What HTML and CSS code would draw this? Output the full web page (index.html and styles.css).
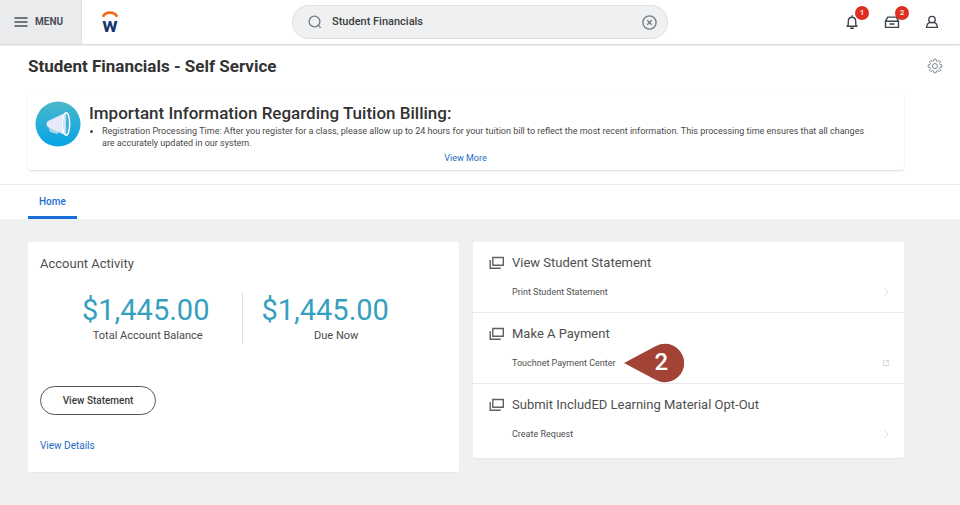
FILE: index.html
```html
<!DOCTYPE html>
<html lang="en">
<head>
    <meta charset="UTF-8">
    <meta name="viewport" content="width=device-width, initial-scale=1.0">
    <title>Student Financials</title>
    <link rel="stylesheet" href="styles.css">
</head>
<body>
    <header class="topbar">
        <div class="topbar-left">
            <button class="menu-btn" type="button">
                <svg width="14" height="10" viewBox="0 0 14 10" aria-hidden="true">
                    <path d="M0.5 1h13M0.5 5h13M0.5 9h13" stroke="#494f55" stroke-width="1.6"/>
                </svg>
                MENU
            </button>
            <a class="logo" href="#" aria-label="Workday home">
                <svg width="24" height="28" viewBox="0 0 24 28">
                    <path d="M4.8 8.8a7.8 6.8 0 0 1 14.4 0" fill="none" stroke="#f26b1d" stroke-width="2.6"/>
                    <text class="logo-text" x="12" y="24" text-anchor="middle">w</text>
                </svg>
            </a>
        </div>
        <div class="search">
            <svg width="14" height="14" viewBox="0 0 14 14" fill="none" stroke="#737a80" stroke-width="1.3" aria-hidden="true">
                <circle cx="6.5" cy="6.5" r="5.4"/>
                <path d="M10.4 10.4l2.3 2.5"/>
            </svg>
            <input type="text" value="Student Financials" aria-label="Search">
            <button type="button" aria-label="Clear search">
                <svg width="15" height="15" viewBox="0 0 15 15" fill="none" stroke="#737a80" stroke-width="1.3">
                    <circle cx="7.5" cy="7.5" r="6.6"/>
                    <path d="M5.3 5.3l4.4 4.4M9.7 5.3l-4.4 4.4"/>
                </svg>
            </button>
        </div>
        <div class="topbar-right">
            <button class="icon-btn" type="button" aria-label="Notifications">
                <svg width="16" height="16" viewBox="0 0 16 16" fill="none" stroke="#3f464d" stroke-width="1.4">
                    <path d="M2.4 12.3h11.2M3.8 12.2c.6-1.6.5-3.2.5-4.8C4.3 5 5.8 3.2 8 3.2s3.7 1.8 3.7 4.2c0 1.6-.1 3.2.5 4.8M8 1.3v1.9"/>
                    <path d="M6.2 14.2h3.6" stroke-width="1.6"/>
                </svg>
                <span class="badge">1</span>
            </button>
            <button class="icon-btn" type="button" aria-label="Inbox">
                <svg width="16" height="16" viewBox="0 0 16 16" fill="none" stroke="#3f464d" stroke-width="1.4">
                    <path d="M1.5 7.2h13v6.2h-13zM1.5 7.2l2.2-4.1h8.6l2.2 4.1M5.5 10h5"/>
                </svg>
                <span class="badge">2</span>
            </button>
            <button class="icon-btn" type="button" aria-label="Profile">
                <svg width="16" height="16" viewBox="0 0 16 16" fill="none" stroke="#3f464d" stroke-width="1.4">
                    <circle cx="8" cy="5.6" r="3.2"/>
                    <path d="M6 8.3c-2 .7-3.3 1.9-3.3 5.1h10.6c0-3.2-1.3-4.4-3.3-5.1"/>
                </svg>
            </button>
        </div>
    </header>

    <main>
        <div class="page-title">
            <h1>Student Financials - Self Service</h1>
            <button class="icon-btn" type="button" aria-label="Settings">
                <svg width="16" height="16" viewBox="0 0 16 16" fill="none" stroke="#81888e" stroke-width="1" stroke-linejoin="round">
                    <path d="M6.9 1.2h2.2l.4 1.9 1 .4 1.6-1.1 1.5 1.5-1.1 1.6.4 1 1.9.4v2.2l-1.9.4-.4 1 1.1 1.6-1.5 1.5-1.6-1.1-1 .4-.4 1.9H6.9l-.4-1.9-1-.4-1.6 1.1-1.5-1.5 1.1-1.6-.4-1-1.9-.4V6.9l1.9-.4.4-1-1.1-1.6 1.5-1.5 1.6 1.1 1-.4z"/>
                    <circle cx="8" cy="8" r="2.5"/>
                </svg>
            </button>
        </div>

        <section class="announcement">
            <svg width="46" height="46" viewBox="0 0 46 46" aria-hidden="true">
                <defs>
                    <linearGradient id="sky" x1="0" y1="0" x2="0" y2="1">
                        <stop offset="0" stop-color="#4bb8c9"/>
                        <stop offset="1" stop-color="#05a3e6"/>
                    </linearGradient>
                </defs>
                <circle cx="23" cy="23" r="22.5" fill="url(#sky)"/>
                <path d="M13.5 27l1.5 4 8 2.2v-4z" fill="#a9d3ee"/>
                <path d="M31 11.5L14 19.6c-3.3 1.4-3.3 5.8 0 7.2l17 7.8z" fill="#e6e9fa"/>
                <ellipse cx="31.2" cy="23" rx="3.5" ry="11.3" fill="#40b5df" stroke="#fff" stroke-width="1.4"/>
                <path d="M30.8 13v20c-2-2-2.4-6-2.4-10s.4-8 2.4-10z" fill="#e1e6f9"/>
            </svg>
            <div>
                <h2>Important Information Regarding Tuition Billing:</h2>
                <ul>
                    <li>Registration Processing Time: After you register for a class, please allow up to 24 hours for your tuition bill to reflect the most recent information. This processing time ensures that all changes are accurately updated in our system.</li>
                </ul>
            </div>
            <a class="view-more" href="#">View More</a>
        </section>

        <nav class="tabs">
            <a class="tab" href="#">Home</a>
        </nav>

        <div class="dashboard">
            <section class="card account">
                <h3>Account Activity</h3>
                <div class="amounts">
                    <div class="amount">
                        <span class="value">$1,445.00</span>
                        <span class="label">Total Account Balance</span>
                    </div>
                    <div class="amount">
                        <span class="value">$1,445.00</span>
                        <span class="label">Due Now</span>
                    </div>
                </div>
                <button class="statement-btn" type="button">View Statement</button>
                <a class="details" href="#">View Details</a>
            </section>

            <section class="card">
                <div class="task">
                    <svg width="16" height="14" viewBox="0 0 16 14" fill="none" stroke="#5c6165" stroke-width="1.4">
                        <path d="M3.8 1.5h10.5v7.8H3.8zM1.2 4v8.2h10.6"/>
                    </svg>
                    <h3>View Student Statement</h3>
                    <a class="task-link" href="#">Print Student Statement</a>
                    <svg width="8" height="8" viewBox="0 0 8 8" fill="none" stroke="#d9dbdd">
                        <path d="M2.5 .5L6 4 2.5 7.5"/>
                    </svg>
                </div>
                <div class="task">
                    <svg width="16" height="14" viewBox="0 0 16 14" fill="none" stroke="#5c6165" stroke-width="1.4">
                        <path d="M3.8 1.5h10.5v7.8H3.8zM1.2 4v8.2h10.6"/>
                    </svg>
                    <h3>Make A Payment</h3>
                    <div class="link-wrap">
                        <a class="task-link" href="#">Touchnet Payment Center</a>
                        <div class="callout">
                            <svg width="60" height="40" viewBox="0 0 60 40" aria-hidden="true">
                                <path d="M0 20L31 3.6C35 1.5 38 .8 41 .8a19.200 19.200 0 0 1 0 38.400c-3 0-6-.7-10-2.800z" fill="#a24335"/>
                            </svg>
                            <span>2</span>
                        </div>
                    </div>
                    <svg width="8" height="8" viewBox="0 0 8 8" fill="none" stroke="#d5d7d9">
                        <path d="M3.5 1.5h-2v5h5v-2M3.5 4.5l3-3M4.5 1.5h2v2"/>
                    </svg>
                </div>
                <div class="task">
                    <svg width="16" height="14" viewBox="0 0 16 14" fill="none" stroke="#5c6165" stroke-width="1.4">
                        <path d="M3.8 1.5h10.5v7.8H3.8zM1.2 4v8.2h10.6"/>
                    </svg>
                    <h3>Submit IncludED Learning Material Opt-Out</h3>
                    <a class="task-link" href="#">Create Request</a>
                    <svg width="8" height="8" viewBox="0 0 8 8" fill="none" stroke="#d9dbdd">
                        <path d="M2.5 .5L6 4 2.5 7.5"/>
                    </svg>
                </div>
            </section>
        </div>
    </main>
</body>
</html>
```
FILE: styles.css
```css
*, *::before, *::after {
    box-sizing: border-box;
}

body {
    margin: 0;
    min-height: 100vh;
    background-color: #eef0f2;
    color: #4a4a4a;
    font-family: Roboto, "Liberation Sans", sans-serif;
    font-size: 11px;
    line-height: 16px;
}

h1, h2, h3, ul {
    margin: 0;
    padding: 0;
}

button {
    padding: 0;
    border: none;
    background: none;
    color: inherit;
    font: inherit;
    cursor: pointer;
}

a {
    color: #1a6bc4;
    text-decoration: none;
}

svg {
    display: block;
}

/* Top bar */
.topbar {
    position: relative;
    display: grid;
    grid-template-columns: 1fr 376px 1fr;
    height: 44px;
    background-color: #fff;
    box-shadow: 0 1px 2px rgba(0, 0, 0, 0.2);
}

.topbar-left {
    display: flex;
}

.menu-btn {
    display: flex;
    align-items: center;
    gap: 7px;
    width: 82px;
    padding-left: 14px;
    border-right: 1px solid #dfe2e4;
    background-color: #e9ebed;
    color: #494f55;
    font-size: 10px;
    font-weight: 700;
}

.logo {
    display: flex;
    align-items: center;
    padding-left: 16px;
}

.logo-text {
    fill: #15356f;
    font-size: 21px;
    font-weight: 700;
}

.search {
    display: flex;
    align-items: center;
    align-self: center;
    gap: 10px;
    height: 34px;
    padding: 0 10px 0 15px;
    border: 1px solid #dcdee0;
    border-radius: 17px;
    background-color: #eef0f1;
}

.search input {
    flex: 1;
    min-width: 0;
    padding: 0;
    border: none;
    outline: none;
    background: none;
    color: #3c3c3c;
    font: inherit;
    font-weight: 500;
}

.topbar-right {
    display: flex;
    align-items: center;
    justify-content: flex-end;
    gap: 24px;
    padding-right: 20px;
}

.icon-btn {
    position: relative;
}

.badge {
    position: absolute;
    top: -8px;
    left: 11px;
    width: 14px;
    border-radius: 7px;
    background-color: #de2e21;
    color: #fff;
    font-size: 8px;
    font-weight: 500;
    line-height: 14px;
    text-align: center;
}

/* Page heading and announcement */
main {
    background-color: #fff;
}

.page-title {
    display: flex;
    align-items: center;
    justify-content: space-between;
    height: 44px;
    padding: 0 17px 0 28px;
}

h1 {
    color: #333;
    font-size: 17px;
    font-weight: 700;
}

.announcement {
    display: grid;
    grid-template-columns: 46px 1fr;
    column-gap: 8px;
    margin: 5px 56px 14px 28px;
    padding: 8px 8px 4px 7px;
    border-radius: 3px;
    box-shadow: 0 1px 2px rgba(0, 0, 0, 0.14);
}

h2 {
    color: #333;
    font-size: 17px;
    font-weight: 500;
    line-height: 24px;
}

.announcement ul {
    padding: 0 18px 0 13px;
    font-size: 9px;
    line-height: 12px;
}

.view-more {
    grid-column: span 2;
    justify-self: center;
    margin-top: 1px;
    font-size: 9px;
}

/* Tabs */
.tabs {
    display: flex;
    padding-left: 28px;
    border-top: 1px solid #e8eaeb;
}

.tab {
    height: 34px;
    padding: 0 11px;
    border-bottom: 3px solid #1a6fd8;
    border-radius: 2px 2px 0 0;
    color: #1a6fd8;
    font-size: 10px;
    font-weight: 500;
    line-height: 34px;
}

/* Dashboard cards */
.dashboard {
    display: grid;
    grid-template-columns: 1fr 1fr;
    align-items: start;
    gap: 14px;
    padding: 23px 56px 33px 28px;
    background-color: #eef0f2;
}

.card {
    border-radius: 2px;
    background-color: #fff;
    box-shadow: 0 1px 1px rgba(0, 0, 0, 0.04);
}

h3 {
    color: #4f4f4f;
    font-size: 13px;
    font-weight: 400;
}

.account {
    display: flex;
    flex-direction: column;
    align-items: flex-start;
    padding: 14px 12px 18px;
}

.amounts {
    display: flex;
    margin: 20px 0 42px;
}

.amount {
    display: flex;
    flex-direction: column;
    align-items: center;
    padding: 0 33px 0 42px;
}

.amount + .amount {
    padding: 0 0 0 18px;
    border-left: 1px solid #e0e2e3;
}

.label {
    padding-left: 4px;
}

.amount + .amount .label {
    padding-left: 22px;
}

.value {
    color: #369fc0;
    font-size: 29px;
    line-height: 36px;
}

.statement-btn {
    width: 116px;
    height: 29px;
    margin-bottom: 23px;
    border: 1px solid #555;
    border-radius: 15px;
    color: #3c3c3c;
    font-size: 10px;
    font-weight: 500;
}

.details {
    font-size: 10px;
}

.task {
    display: grid;
    grid-template-columns: 23px 1fr 8px;
    row-gap: 13px;
    align-items: center;
    padding: 13px 14px 12px 16px;
    border-bottom: 1px solid #e8eaeb;
}

.task:last-child {
    padding-bottom: 16px;
    border-bottom: none;
}

.task h3 {
    grid-column: span 2;
}

.task-link {
    grid-column: 2;
    color: #4f4f4f;
    font-size: 9px;
}

.link-wrap {
    grid-column: 2;
    position: relative;
    justify-self: start;
    display: flex;
}

.callout {
    position: absolute;
    top: -12px;
    left: 100%;
    margin-left: 8px;
}

.callout span {
    position: absolute;
    top: 0;
    left: 31px;
    color: #fff;
    font-size: 24px;
    font-weight: 500;
    line-height: 38px;
}
```
